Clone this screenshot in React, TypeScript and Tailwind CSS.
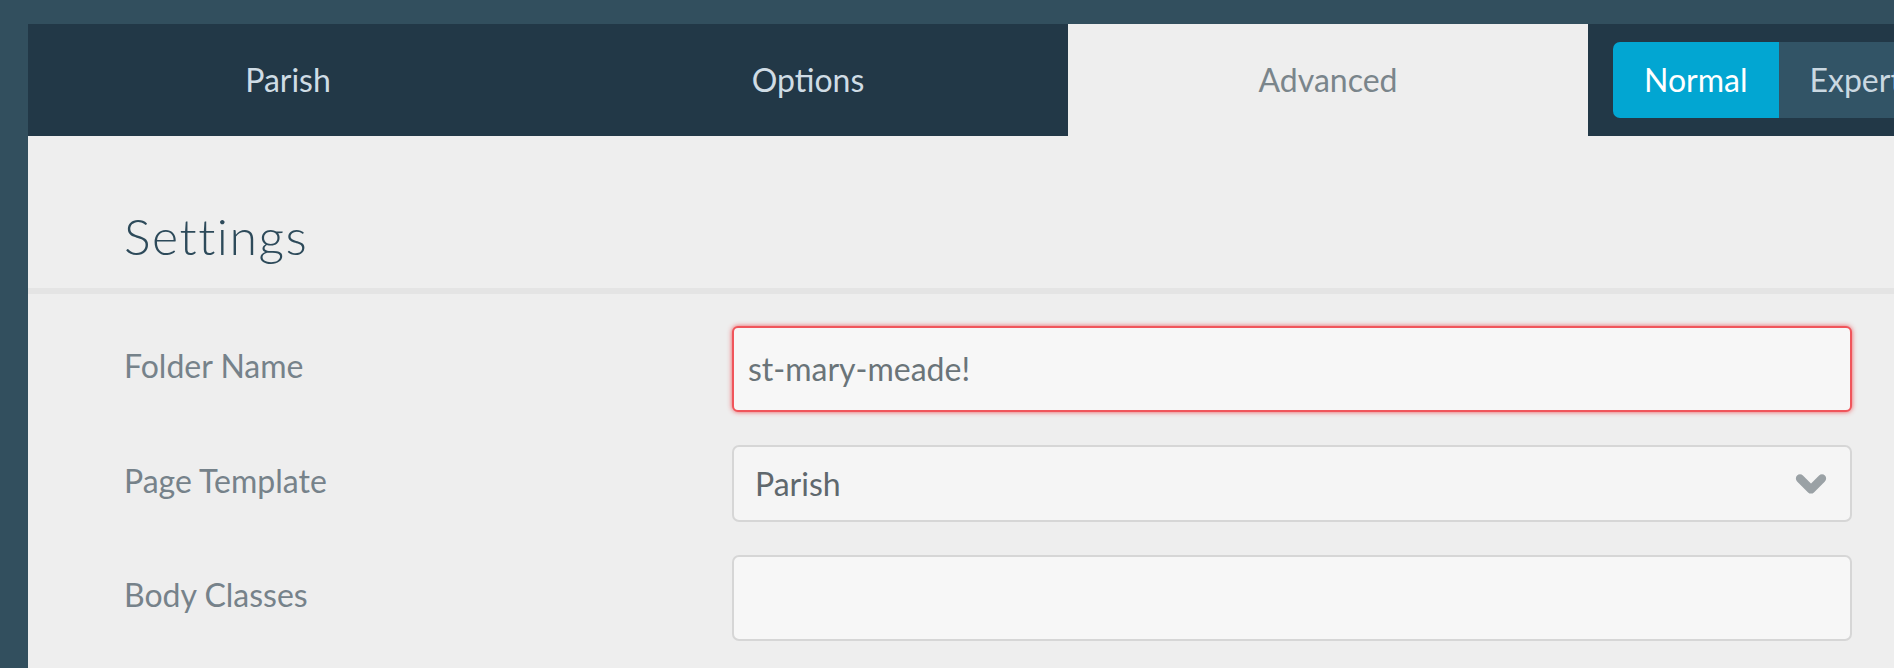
import { ChevronDown } from 'lucide-react';

const tabs = [
  { label: 'Parish', active: false },
  { label: 'Options', active: false },
  { label: 'Advanced', active: true },
];

const Field = ({ label, children }: { label: string; children: React.ReactNode }) => (
  <div className="flex items-center">
    <div className="w-[608px] shrink-0 pb-[6px] text-[32px] text-[#76828a]">{label}</div>
    <div className="w-[1120px] shrink-0">{children}</div>
  </div>
);

const App = () => {
  return (
    <div
      className="h-[668px] w-full overflow-hidden bg-[#324f5e] pl-[28px] pt-[24px]"
      style={{ fontFamily: 'Lato, "Liberation Sans", sans-serif' }}
    >
      <div className="h-full overflow-hidden bg-[#eeeeee]">
        {/* tab bar */}
        <div className="flex h-[112px] bg-[#223847]">
          {tabs.map((t) => (
            <div
              key={t.label}
              className={
                t.active
                  ? 'flex w-[520px] shrink-0 items-center justify-center bg-[#eeeeee] text-[32px] text-[#7a858b]'
                  : 'flex w-[520px] shrink-0 items-center justify-center text-[32px] text-[#cfdce5]'
              }
            >
              {t.label}
            </div>
          ))}
          <div className="flex shrink-0 items-center pl-[25px]">
            <div className="flex h-[76px] overflow-hidden rounded-[7px]">
              <button className="flex items-center bg-[#02a6d2] px-[31px] text-[32px] text-white">Normal</button>
              <button className="flex items-center bg-[#325466] px-[31px] text-[32px] text-[#cad8e1]">Expert</button>
            </div>
          </div>
        </div>

        {/* section header */}
        <div className="flex h-[152px] items-center pl-[96px] pt-[48px]">
          <h2 className="text-[50px] font-light tracking-[1.5px] text-[#2d4a5a]">Settings</h2>
        </div>
        <div className="h-[6px] bg-[#e4e4e4]" />

        {/* fields */}
        <div className="flex flex-col gap-[33px] pl-[96px] pt-[32px]">
          <Field label="Folder Name">
            <div className="flex h-[86px] items-center rounded-[6px] border-2 border-[#f0555b] bg-[#f7f7f7] px-[14px] text-[32px] text-[#6a7479] shadow-[0_0_5px_rgba(240,70,75,0.9)]">
              st-mary-meade!
            </div>
          </Field>
          <Field label="Page Template">
            <div className="flex h-[77px] items-center justify-between rounded-[7px] border-2 border-[#d6d6d6] bg-[#f5f5f5] pl-[21px] pr-[17px] text-[32px] text-[#5f686d]">
              <span>Parish</span>
              <ChevronDown className="h-[44px] w-[44px] text-[#9aa1a5]" strokeWidth={4.5} />
            </div>
          </Field>
          <Field label="Body Classes">
            <div className="h-[86px] rounded-[7px] border-2 border-[#d6d6d6] bg-[#f7f7f7]" />
          </Field>
        </div>
      </div>
    </div>
  );
};

export default App;
